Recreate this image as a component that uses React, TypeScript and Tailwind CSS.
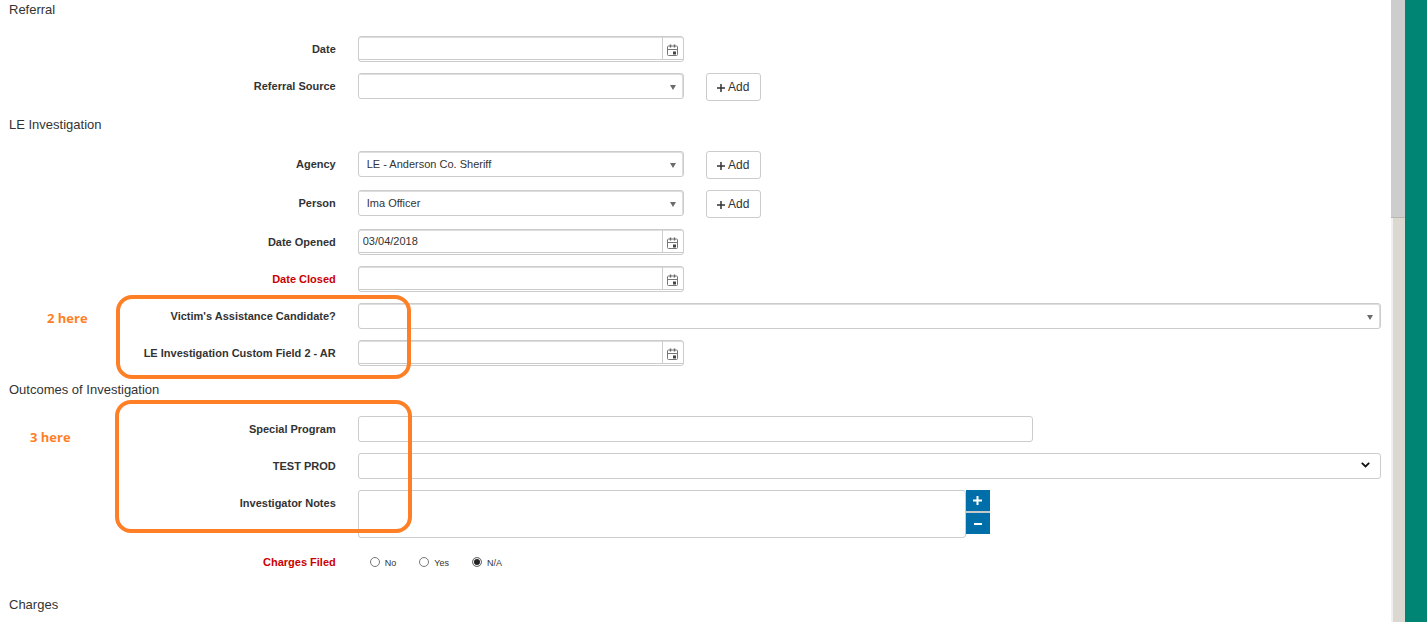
import { useId, type ReactNode } from "react";

type RowProps = {
  label: string;
  htmlFor?: string;
  required?: boolean;
  children: ReactNode;
};

function Row({ label, htmlFor, required, children }: RowProps) {
  return (
    <div className="flex items-start">
      <div className="w-1/4 shrink-0 pr-3 text-right">
        <label
          htmlFor={htmlFor}
          className={`block text-[11px] leading-[26px] font-bold ${required ? "text-[#cc0000]" : "text-[#333333]"}`}
        >
          {label}
        </label>
      </div>
      <div className="flex min-w-0 flex-1 items-start px-[10px]">{children}</div>
    </div>
  );
}

function CalendarIcon() {
  return (
    <svg width="12" height="12" viewBox="0 0 12 12" fill="none" aria-hidden="true">
      <rect x="0.5" y="2" width="10" height="9.5" rx="1" stroke="#777" />
      <path d="M1 5.5H10" stroke="#777" />
      <path d="M3.5 0.5V3.5M7.5 0.5V3.5" stroke="#666" strokeWidth="1.4" />
      <rect x="6" y="7.5" width="3" height="3" fill="#444" />
    </svg>
  );
}

function DateRow({ label, value = "", required }: { label: string; value?: string; required?: boolean }) {
  const id = useId();
  return (
    <Row label={label} htmlFor={id} required={required}>
      <div className="h-[26px] w-[326px] rounded-[3px] border border-[#cccccc] shadow-[inset_0_1px_0_#dddddd]">
        <div className="flex h-[23px] border-b border-[#cccccc]">
          <input
            id={id}
            type="text"
            defaultValue={value}
            className="min-w-0 flex-1 bg-transparent px-1 text-[11px] text-[#333333] outline-none"
          />
          <button
            type="button"
            aria-label={`Pick ${label}`}
            className="flex w-[21px] items-center justify-center border-l border-[#cccccc] pt-[3px]"
          >
            <CalendarIcon />
          </button>
        </div>
      </div>
    </Row>
  );
}

function SelectRow({
  label,
  value = "",
  wide,
  native,
  add,
}: {
  label: string;
  value?: string;
  wide?: boolean;
  native?: boolean;
  add?: boolean;
}) {
  const id = useId();
  return (
    <Row label={label} htmlFor={id}>
      <div className={`relative ${wide ? "w-full" : "w-[326px]"}`}>
        <select
          id={id}
          defaultValue={value}
          className={`block h-[26px] w-full appearance-none rounded-[3px] border border-[#cccccc] bg-white pr-6 pl-2 text-[11px] text-[#333333] outline-none ${native ? "" : "shadow-[inset_-1px_1px_0_#dddddd]"}`}
        >
          <option value={value}>{value}</option>
        </select>
        {native ? (
          <svg className="pointer-events-none absolute top-[9px] right-[11px]" width="9" height="6" viewBox="0 0 9 6" aria-hidden="true">
            <path d="M0.8 0.8L4.5 4.4L8.2 0.8" fill="none" stroke="#111" strokeWidth="1.8" />
          </svg>
        ) : (
          <svg className="pointer-events-none absolute top-[12px] right-[8px]" width="6" height="5" viewBox="0 0 6 5" aria-hidden="true">
            <path d="M0 0H6L3 5Z" fill="#6b6b6b" />
          </svg>
        )}
      </div>
      {add && (
        <button
          type="button"
          aria-label={`Add ${label}`}
          className="ml-[22px] flex h-7 w-[55px] items-center justify-center gap-[3px] rounded-[3px] border border-[#cccccc] bg-white text-[12px] text-[#333333]"
        >
          <svg width="8" height="8" viewBox="0 0 8 8" className="mt-[2px]" aria-hidden="true">
            <path d="M4 0V8M0 4H8" stroke="#333" strokeWidth="1.5" />
          </svg>
          Add
        </button>
      )}
    </Row>
  );
}

function Section({ title, children }: { title: string; children?: ReactNode }) {
  return (
    <section>
      <h2 className="mb-4 pl-[9px] text-[13px] leading-5 text-[#333333]">{title}</h2>
      {children && <div className="flex flex-col gap-[11px]">{children}</div>}
    </section>
  );
}

function Choice({ label, checked }: { label: string; checked?: boolean }) {
  return (
    <label className="flex items-center gap-[5px] text-[9px] leading-[14px] text-[#333333]">
      <input
        type="radio"
        name="charges-filed"
        defaultChecked={checked}
        className="size-[10px] appearance-none rounded-full border border-[#777777] bg-white checked:bg-[#222222] checked:shadow-[inset_0_0_0_1px_#ffffff]"
      />
      <span className="pt-[2px]">{label}</span>
    </label>
  );
}

export default function App() {
  return (
    <div className="flex min-h-screen bg-white font-['Liberation_Sans',Arial,sans-serif]">
      <main className="relative flex min-w-0 flex-1 flex-col gap-[14px]">
        <Section title="Referral">
          <DateRow label="Date" />
          <SelectRow label="Referral Source" add />
        </Section>

        <Section title="LE Investigation">
          <SelectRow label="Agency" value="LE - Anderson Co. Sheriff" add />
          <SelectRow label="Person" value="Ima Officer" add />
          <DateRow label="Date Opened" value="03/04/2018" />
          <DateRow label="Date Closed" required />
          <SelectRow label="Victim's Assistance Candidate?" wide />
          <DateRow label="LE Investigation Custom Field 2 - AR" />
        </Section>

        <Section title="Outcomes of Investigation">
          <Row label="Special Program" htmlFor="special-program">
            <input
              id="special-program"
              type="text"
              className="h-[26px] w-[675px] rounded-[3px] border border-[#cccccc] px-2 text-[11px] outline-none"
            />
          </Row>
          <SelectRow label="TEST PROD" wide native />
          <Row label="Investigator Notes" htmlFor="notes">
            <textarea
              id="notes"
              className="block h-12 w-[608px] resize-none rounded-[3px] border border-[#cccccc] px-2 text-[11px] outline-none"
            />
            <div className="flex flex-col gap-[2px] bg-[#c4c9cc]">
              <button type="button" aria-label="Enlarge notes" className="flex h-[21px] w-6 items-center justify-center bg-[#006ea8]">
                <svg width="9" height="9" viewBox="0 0 9 9" aria-hidden="true">
                  <path d="M4.5 0V9M0 4.5H9" stroke="#fff" strokeWidth="2" />
                </svg>
              </button>
              <button type="button" aria-label="Shrink notes" className="flex h-[21px] w-6 items-center justify-center bg-[#006ea8]">
                <svg width="8" height="2" viewBox="0 0 8 2" aria-hidden="true">
                  <path d="M0 1H8" stroke="#fff" strokeWidth="2" />
                </svg>
              </button>
            </div>
          </Row>
          <Row label="Charges Filed" required>
            <div role="radiogroup" aria-label="Charges Filed" className="flex h-8 items-start gap-[23px] pt-[5px] pl-3">
              <Choice label="No" />
              <Choice label="Yes" />
              <Choice label="N/A" checked />
            </div>
          </Row>
        </Section>

        <Section title="Charges" />

        <div className="pointer-events-none absolute top-[295px] left-[116px] h-[84px] w-[295px] rounded-[16px] border-4 border-[#ff7f27]" />
        <div className="pointer-events-none absolute top-[400px] left-[115px] h-[133px] w-[297px] rounded-[16px] border-4 border-[#ff7f27]" />
        <p className="absolute top-[309px] left-[47px] font-['Open_Sans',sans-serif] text-[13px] leading-[18px] font-bold text-[#ff7f27]">2 here</p>
        <p className="absolute top-[428px] left-[30px] font-['Open_Sans',sans-serif] text-[13px] leading-[18px] font-bold text-[#ff7f27]">3 here</p>
      </main>

      <div className="flex w-[14px] shrink-0 flex-col border-l-2 border-[#f0f0f0] bg-[#dbd8d1]" aria-hidden="true">
        <div className="-ml-[2px] h-[218px] border-b border-[#b8b8b0] bg-[#cdcdcd]" />
      </div>
      <div className="w-[22px] shrink-0 bg-[#008575]" />
    </div>
  );
}
